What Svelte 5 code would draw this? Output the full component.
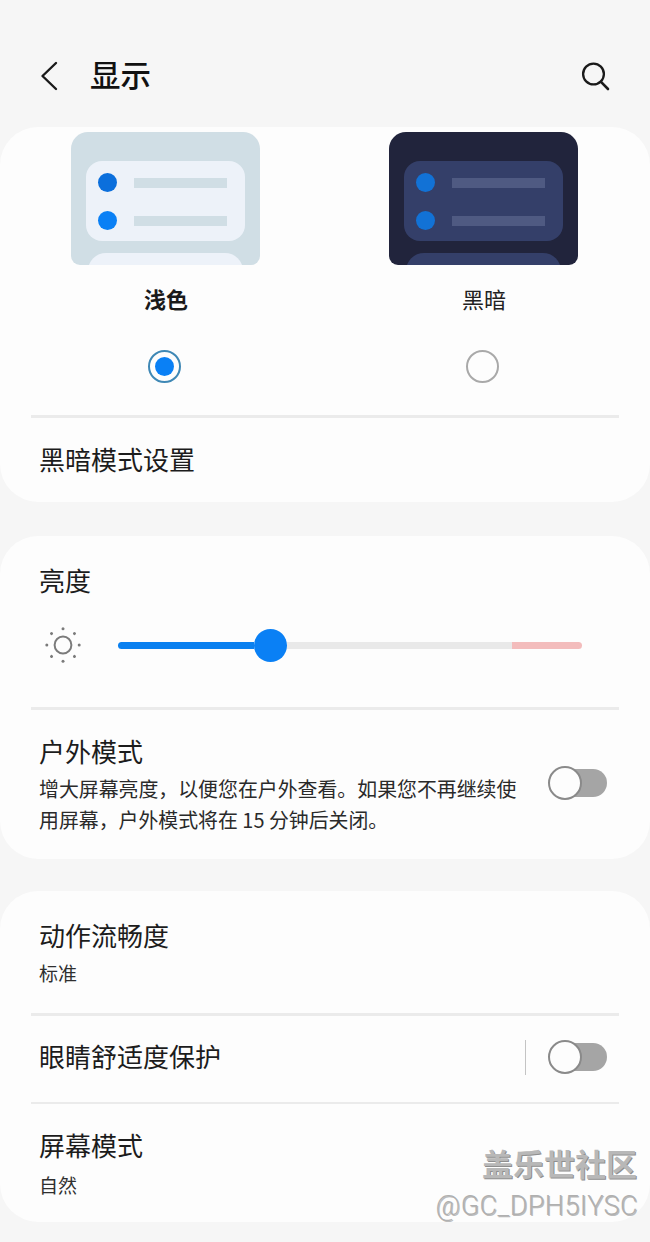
<script>
	const themes = [
		{ name: '浅色', dark: false, on: true },
		{ name: '黑暗', dark: true, on: false }
	];
	const sunRays = [0, 45, 90, 135, 180, 225, 270, 315];
</script>

{#snippet toggle()}
	<div class="toggle"><span class="knob"></span></div>
{/snippet}

<div class="page">
	<header>
		<div class="head-left">
			<svg class="back" width="18" height="30" viewBox="0 0 18 30"><path d="M16 2 2.5 15 16 28" fill="none" stroke="#1a1a1a" stroke-width="2.4" stroke-linecap="round" stroke-linejoin="round"/></svg>
			<h1>显示</h1>
		</div>
		<svg class="search" width="30" height="30" viewBox="0 0 30 30"><circle cx="13.5" cy="13" r="10.4" fill="none" stroke="#1a1a1a" stroke-width="2.3"/><path d="M21 20.8 28 28" fill="none" stroke="#1a1a1a" stroke-width="2.6" stroke-linecap="round"/></svg>
	</header>

	<section class="card first">
		<div class="themes">
			{#each themes as t}
				<div class="theme" class:dark={t.dark}>
					<div class="preview">
						<div class="panel">
							<div class="line"><i class="dot top"></i><b></b></div>
							<div class="line"><i class="dot"></i><b></b></div>
						</div>
						<div class="panel-next"></div>
					</div>
					<div class="label" class:strong={t.on}>{t.name}</div>
					<div class="radio" class:on={t.on}></div>
				</div>
			{/each}
		</div>
		<div class="rule"></div>
		<div class="row plain">黑暗模式设置</div>
	</section>

	<section class="card second">
		<div class="title bright">亮度</div>
		<div class="slider-row">
			<svg class="sun" width="36" height="36" viewBox="0 0 36 36">
				<circle cx="18" cy="18" r="8.4" fill="none" stroke="#7b7b7b" stroke-width="2"/>
				{#each sunRays as a}
					<circle cx="18" cy="1.8" r="1.5" fill="#7b7b7b" transform="rotate({a} 18 18)"/>
				{/each}
			</svg>
			<div class="slider">
				<div class="fill"></div>
				<div class="thumb"></div>
				<div class="track"></div>
				<div class="hot"></div>
			</div>
		</div>
		<div class="rule"></div>
		<div class="outdoor">
			<div class="outdoor-text">
				<div class="title">户外模式</div>
				<p>增大屏幕亮度，以便您在户外查看。如果您不再继续使用屏幕，户外模式将在 15 分钟后关闭。</p>
			</div>
			{@render toggle()}
		</div>
	</section>

	<section class="card third">
		<div class="row two first-row">
			<div class="title">动作流畅度</div>
			<div class="sub">标准</div>
		</div>
		<div class="rule"></div>
		<div class="row comfort">
			<div class="title">眼睛舒适度保护</div>
			<div class="controls"><span class="vline"></span>{@render toggle()}</div>
		</div>
		<div class="rule"></div>
		<div class="row two last-row">
			<div class="title">屏幕模式</div>
			<div class="sub">自然</div>
		</div>
	</section>

	<div class="watermark">
		<div class="wm-cn">盖乐世社区</div>
		<div class="wm-id">@GC_DPH5IYSC</div>
	</div>
</div>

<style>
	:global(body) {
		margin: 0;
		background: #f6f6f6;
	}

	.page {
		position: relative;
		width: 650px;
		height: 1242px;
		overflow: hidden;
		background: #f6f6f6;
		color: #1c1c1c;
		font-family: 'Noto Sans CJK SC', 'Noto Sans', sans-serif;
	}

	header {
		height: 127px;
		box-sizing: border-box;
		padding: 61px 40px 0 40px;
		display: flex;
		justify-content: space-between;
		align-items: flex-start;
	}

	.head-left {
		display: flex;
		align-items: flex-start;
		gap: 32px;
	}

	.back {
		display: block;
	}

	h1 {
		margin: -2px 0 0;
		font-size: 30.5px;
		line-height: 30px;
		font-weight: 500;
		color: #111;
	}

	.search {
		display: block;
	}

	.card {
		background: #fdfdfd;
		border-radius: 38px;
	}

	.first {
		height: 375px;
		padding-top: 5px;
		box-sizing: border-box;
	}

	.second {
		height: 323px;
		margin-top: 34px;
		box-sizing: border-box;
		padding-top: 27px;
	}

	.third {
		height: 331px;
		margin-top: 32px;
		box-sizing: border-box;
	}

	.themes {
		display: flex;
		gap: 128px;
		padding-left: 71px;
	}

	.theme {
		width: 190px;
		display: flex;
		flex-direction: column;
		align-items: center;
	}

	.preview {
		width: 189px;
		align-self: flex-start;
		height: 133px;
		box-sizing: border-box;
		padding: 29px 15px 0;
		border-radius: 17px 17px 9px 9px;
		overflow: hidden;
		background: #d0dee5;
	}

	.panel {
		height: 80px;
		border-radius: 16px;
		background: #edf2f9;
		padding: 12px 18px 0 12px;
		box-sizing: border-box;
	}

	.line {
		display: flex;
		align-items: center;
		gap: 17px;
		height: 19px;
		margin-bottom: 19px;
	}

	.line i {
		width: 19px;
		height: 19px;
		border-radius: 50%;
		background: #0a80f5;
		flex: none;
	}

	.line i.top {
		background: #0b6fdc;
	}

	.line b {
		flex: 1;
		height: 10px;
		background: #d0dee5;
	}

	.panel-next {
		height: 30px;
		margin: 12px 2px 0;
		border-radius: 18px 18px 0 0;
		background: #edf2f9;
	}

	.dark .preview {
		background: #21243c;
	}

	.dark .panel {
		background: #343f69;
	}

	.dark .line i,
	.dark .line i.top {
		background: #1272d6;
	}

	.dark .line b {
		background: #4f5a82;
	}

	.dark .panel-next {
		background: #343f69;
	}

	.label {
		margin-top: 18px;
		font-size: 22px;
		line-height: 30px;
		color: #222;
	}

	.label.strong {
		font-weight: 700;
		color: #1a1a1a;
	}

	.radio {
		width: 33px;
		height: 33px;
		margin-top: 37px;
		margin-right: 3px;
		box-sizing: border-box;
		border: 2px solid #a9a9a9;
		border-radius: 50%;
		display: flex;
		align-items: center;
		justify-content: center;
	}

	.radio.on {
		border-color: #3f88b5;
	}

	.radio.on::after {
		content: '';
		width: 19px;
		height: 19px;
		border-radius: 50%;
		background: #0a80f5;
	}

	.rule {
		height: 2.5px;
		margin: 0 31px;
		background: #ebebeb;
	}

	.themes + .rule {
		margin-top: 32px;
	}

	.row.plain {
		padding: 22px 39px 0;
		font-size: 26px;
		line-height: 38px;
	}

	.title {
		font-size: 26px;
		line-height: 34px;
	}

	.title.bright {
		padding-left: 39px;
	}

	.slider-row {
		display: flex;
		align-items: center;
		margin-top: 30px;
		padding-left: 45px;
		height: 36px;
	}

	.slider {
		margin-left: 37px;
		width: 464px;
		height: 32px;
		display: flex;
		align-items: center;
	}

	.fill {
		width: 137px;
		height: 7px;
		border-radius: 4px 0 0 4px;
		background: #0a80f0;
	}

	.thumb {
		width: 33px;
		height: 33px;
		flex: none;
		border-radius: 50%;
		background: #0a80f5;
	}

	.track {
		width: 227px;
		height: 7px;
		background: #e9e9e9;
	}

	.hot {
		width: 70px;
		height: 7px;
		border-radius: 0 4px 4px 0;
		background: #f3bcbc;
	}

	.slider-row + .rule {
		margin-top: 44px;
	}

	.outdoor {
		display: flex;
		align-items: flex-start;
		padding: 24px 43px 0 39px;
		justify-content: space-between;
	}

	.outdoor-text {
		width: 482px;
	}

	.outdoor p {
		margin: 5px 0 0;
		font-size: 19.9px;
		line-height: 31px;
		color: #2a2a2a;
	}

	.outdoor .toggle {
		margin-top: 32px;
	}

	.toggle {
		position: relative;
		width: 59px;
		height: 34px;
		flex: none;
	}

	.toggle::before {
		content: '';
		position: absolute;
		left: 8px;
		right: 0;
		top: 3px;
		height: 28px;
		border-radius: 14px;
		background: #a5a5a5;
	}

	.knob {
		position: absolute;
		left: 0;
		top: 0;
		width: 34px;
		height: 34px;
		box-sizing: border-box;
		border-radius: 50%;
		border: 2px solid #8a8a8a;
		background: #fdfdfd;
	}

	.row.two {
		padding: 0 39px;
	}

	.first-row {
		height: 122px;
		box-sizing: border-box;
		padding-top: 27px !important;
	}

	.sub {
		margin-top: 6px;
		font-size: 19px;
		line-height: 30px;
		color: #2f2f2f;
	}

	.last-row .sub {
		margin-top: 8px;
	}

	.comfort {
		height: 86px;
		padding: 0 43px 0 39px;
		box-sizing: border-box;
		display: flex;
		align-items: flex-start;
		justify-content: space-between;
	}

	.comfort .title {
		margin-top: 23px;
	}

	.controls {
		display: flex;
		align-items: center;
		gap: 22px;
		margin-top: 24px;
	}

	.vline {
		width: 1.5px;
		height: 35px;
		background: #c4c4c4;
	}

	.last-row {
		padding-top: 24px !important;
	}

	.watermark {
		position: absolute;
		right: 12px;
		top: 1141px;
		text-align: right;
		pointer-events: none;
	}

	.wm-cn {
		font-size: 31px;
		line-height: 44px;
		font-weight: 700;
		color: #b8b8b8;
		text-shadow: 1px 1px 0 #8f8f8f;
		margin-right: 1px;
	}

	.wm-id {
		margin-top: 2px;
		font-family: 'Roboto', 'Liberation Sans', sans-serif;
		font-weight: 300;
		font-size: 27px;
		letter-spacing: 0.45px;
		line-height: 38px;
		color: #b0b0b0;
		text-shadow: 1px 1px 0 #bbb;
	}
</style>
